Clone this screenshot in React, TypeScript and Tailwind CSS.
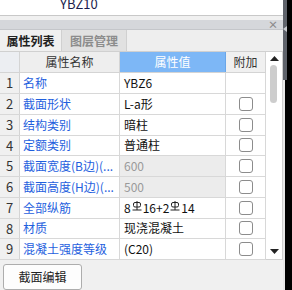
import React from "react";

const rows = [
  { n: "1", name: "名称", value: "YBZ6", check: false },
  { n: "2", name: "截面形状", value: "L-a形", check: true },
  { n: "3", name: "结构类别", value: "暗柱", check: true },
  { n: "4", name: "定额类别", value: "普通柱", check: true },
  { n: "5", name: "截面宽度(B边)(...", value: "600", check: true, dim: true },
  { n: "6", name: "截面高度(H边)(...", value: "500", check: true, dim: true },
  { n: "7", name: "全部纵筋", value: "rebar", check: true },
  { n: "8", name: "材质", value: "现浇混凝土", check: true },
  { n: "9", name: "混凝土强度等级", value: "(C20)", check: true },
];

function Rebar() {
  return (
    <svg width="10" height="11" viewBox="0 0 10 11" className="inline-block align-top mt-[2px] mx-[1px]">
      <rect x="1.5" y="1.5" width="7" height="4.5" rx="1.5" fill="none" stroke="#222" strokeWidth="1" />
      <path d="M5 0V9M0.5 9H9.5" stroke="#222" strokeWidth="1" fill="none" />
    </svg>
  );
}

export default function App() {
  return (
    <div
      className="w-[292px] h-[290px] flex bg-black overflow-hidden"
      style={{ fontFamily: '"Noto Sans CJK SC", "Noto Sans", sans-serif' }}
    >
      <div className="w-[283px] flex flex-col bg-[#f0f0f0]">
        {/* top strip */}
        <div className="h-[17px] bg-white border-b border-[#c8c8c8] relative overflow-hidden">
          <div className="absolute left-[60px] top-[-4px] text-[13px] leading-[16px] text-[#1c1c4c]">YBZ10</div>
        </div>
        <div className="h-[5px]" />
        {/* title bar */}
        <div className="h-[10px] bg-[#d5d7db] flex justify-end items-center pr-[5px] border-b border-[#c4c6ca]">
          <span className="text-[10px] leading-[10px] text-[#8a8a8a] font-bold">×</span>
        </div>
        {/* tabs */}
        <div className="h-[23px] flex bg-[#eeeeee]">
          <div className="w-[62px] flex items-center justify-center text-[12px] font-bold text-[#222] bg-[#f0f0f0] border-r border-[#d0d0d0]">
            属性列表
          </div>
          <div className="w-[65px] flex items-center justify-center text-[12px] font-bold text-[#8c8c8c] bg-[#e1e1e1] border-r border-[#d0d0d0]">
            图层管理
          </div>
        </div>
        {/* table + scrollbar */}
        <div className="flex border-t border-[#d0d0d0]">
          <div className="w-[266px] flex flex-col text-[12px]">
            <div className="h-[21px] grid grid-cols-[20px_100px_106px_40px] border-b border-[#d4d4d4]">
              <div className="bg-[#eceef2] border-r border-[#d4d4d4]" />
              <div className="bg-[#eeeeee] border-r border-[#d4d4d4] flex items-center justify-center text-[#333]">属性名称</div>
              <div className="bg-[#7db7f6] border-r border-[#6aa6e8] flex items-center justify-center text-white">属性值</div>
              <div className="bg-[#f0f0f0] border-r border-[#d4d4d4] flex items-center justify-center text-[#333]">附加</div>
            </div>
            {rows.map((r) => (
              <div key={r.n} className="h-[20.75px] grid grid-cols-[20px_100px_106px_40px] border-b border-[#d8d8d8]">
                <div className="bg-[#f0f0f0] border-r border-[#d4d4d4] flex items-center justify-center text-[13px] text-[#333]">{r.n}</div>
                <div className="bg-white border-r border-[#d8d8d8] flex items-center pl-[3px] text-[#1f5fde] whitespace-nowrap overflow-hidden">
                  {r.name}
                </div>
                <div className={`${r.dim ? "bg-[#ececec] text-[#9a9a9a]" : "bg-white text-[#111]"} border-r border-[#d8d8d8] flex items-center pl-[4px] whitespace-nowrap overflow-hidden`}>
                  {r.value === "rebar" ? (
                    <span>8<Rebar />16+2<Rebar />14</span>
                  ) : (
                    r.value
                  )}
                </div>
                <div className="bg-white border-r border-[#d8d8d8] flex items-center justify-center">
                  {r.check && <div className="w-[14px] h-[14px] rounded-[3px] border border-[#8c8c8c] bg-white" />}
                </div>
              </div>
            ))}
          </div>
          <div className="w-[17px] bg-white border-r border-[#cfcfcf] border-b flex flex-col items-center">
            <svg width="9" height="5" viewBox="0 0 9 5" className="mt-[4px]">
              <path d="M0 5L4.5 0L9 5Z" fill="#222" />
            </svg>
            <div className="w-[7px] h-[38px] rounded-full bg-[#cdcdcd] mt-[4px] -ml-[1px]" />
            <div className="flex-1" />
            <svg width="9" height="5" viewBox="0 0 9 5" className="mb-[5px]">
              <path d="M0 0L4.5 5L9 0Z" fill="#222" />
            </svg>
          </div>
        </div>
        {/* bottom */}
        <div className="flex-1 pl-[3px] pt-[4px]">
          <button className="w-[79px] h-[26px] rounded-[3px] border border-[#adadad] bg-[#fdfdfd] text-[12px] text-[#222] flex items-center justify-center">
            截面编辑
          </button>
        </div>
      </div>
      <div className="w-[4px] flex flex-col">
        <div className="h-[80px] bg-[#5f636b] flex items-start pt-[26px]">
          <svg width="4" height="6" viewBox="0 0 4 6">
            <path d="M4 0L0 3L4 6Z" fill="#c8cbd0" />
          </svg>
        </div>
        <div className="flex-1 bg-[#e8e8e8] w-[2px]" />
      </div>
    </div>
  );
}
